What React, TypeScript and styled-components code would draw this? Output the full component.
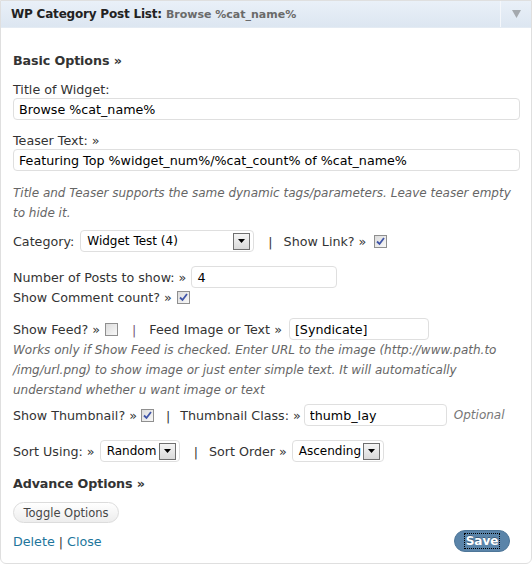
import React from "react";
import styled, { createGlobalStyle } from "styled-components";

const Global = createGlobalStyle`
  html, body { margin: 0; padding: 0; background: #fff; }
  body { font-family: "DejaVu Sans", Verdana, sans-serif; }
`;

const Widget = styled.div`
  width: 530px;
  height: 562px;
  border: 1px solid #dfdfdf;
  border-radius: 0 0 6px 6px;
  background: #fff;
  color: #333;
  font-size: 12.7px;
  display: flex;
  flex-direction: column;
`;

const Header = styled.div`
  height: 26px;
  background: linear-gradient(#e9f0f8, #dce6f1);
  display: flex;
  align-items: stretch;
  border-bottom: 1px solid #e4ebf3;
`;

const HeaderTitle = styled.div`
  flex: 1;
  display: flex;
  align-items: center;
  padding-left: 10px;
  font-weight: bold;
  font-size: 12px;
  letter-spacing: -0.2px;
  color: #222;
  white-space: nowrap;
`;

const HeaderSub = styled.span`
  font-size: 11px;
  letter-spacing: 0;
  color: #6a6a6a;
  margin-left: 4px;
`;

const HeaderToggle = styled.div`
  width: 30px;
  border-left: 1px solid #f4f7fb;
  display: flex;
  align-items: center;
  justify-content: center;
`;

const Body = styled.div`
  flex: 1;
  padding: 23px 11px 0 12px;
  display: flex;
  flex-direction: column;
`;

const Section = styled.div<{ $mt?: number }>`
  font-weight: bold;
  font-size: 12.7px;
  letter-spacing: -0.1px;
  line-height: 20px;
  color: #333;
  margin-top: ${(p) => p.$mt ?? 0}px;
`;

const Label = styled.div<{ $mt?: number }>`
  line-height: 16px;
  margin-top: ${(p) => p.$mt ?? 0}px;
`;

const Field = styled.input<{ $w?: number }>`
  box-sizing: border-box;
  height: 22px;
  width: ${(p) => (p.$w ? `${p.$w}px` : "100%")};
  flex: none;
  border: 1px solid #dfdfdf;
  border-radius: 4px;
  background: #fff;
  padding: 0 5px;
  font-family: "DejaVu Sans", Verdana, sans-serif;
  font-size: 12.7px;
  color: #000;
  outline: none;
`;

const Help = styled.div<{ $mt?: number }>`
  font-style: italic;
  font-size: 12px;
  color: #666;
  line-height: 20px;
  margin-top: ${(p) => p.$mt ?? 0}px;
`;

const Row = styled.div<{ $mt?: number; $h?: number }>`
  display: flex;
  align-items: center;
  height: ${(p) => p.$h ?? 22}px;
  margin-top: ${(p) => p.$mt ?? 0}px;
  white-space: nowrap;
`;

const Gap = styled.span<{ $w: number }>`
  display: inline-block;
  width: ${(p) => p.$w}px;
  flex: none;
`;

const Sep = styled.span<{ $c?: string }>`
  color: ${(p) => p.$c ?? "#333"};
`;

const SelectBox = styled.div<{ $w: number }>`
  box-sizing: border-box;
  width: ${(p) => p.$w}px;
  height: 22px;
  flex: none;
  border: 1px solid #dfdfdf;
  border-radius: 4px;
  display: flex;
  align-items: center;
  padding-left: 6px;
  padding-right: 3px;
  color: #000;
  font-size: 12px;
`;

const SelectText = styled.span`
  flex: 1;
`;

const DropBtn = styled.span`
  box-sizing: border-box;
  width: 17px;
  height: 17px;
  border: 1px solid #6f6f6f;
  background: linear-gradient(#f4f4f4, #dadada);
  display: flex;
  align-items: center;
  justify-content: center;
`;

const Check = styled.span`
  box-sizing: border-box;
  width: 13px;
  height: 13px;
  border: 1px solid #8f8f8f;
  background: linear-gradient(135deg, #dcdcdc, #f8f8f8);
  display: inline-flex;
  align-items: center;
  justify-content: center;
  flex: none;
`;

const Optional = styled.span`
  font-style: italic;
  font-size: 12px;
  color: #777;
`;

const ToggleBtn = styled.div`
  box-sizing: border-box;
  width: 106px;
  height: 21px;
  margin-top: 8px;
  border: 1px solid #dcdcdc;
  border-radius: 11px;
  background: linear-gradient(#ffffff, #ededed);
  color: #464646;
  font-size: 11.5px;
  display: flex;
  align-items: center;
  justify-content: center;
`;

const Footer = styled.div`
  display: flex;
  align-items: center;
  justify-content: space-between;
  height: 22px;
  margin-top: 7px;
  padding-right: 10px;
`;

const Links = styled.div`
  color: #333;
`;

const Link = styled.a`
  color: #21759b;
  text-decoration: none;
`;

const SaveBtn = styled.div`
  box-sizing: border-box;
  width: 56px;
  height: 22px;
  border-radius: 11px;
  background: #5a84a9;
  border: 1px solid #4e7698;
  display: flex;
  align-items: center;
  justify-content: center;
`;

const SaveText = styled.span`
  color: #fff;
  font-weight: bold;
  font-size: 12px;
  line-height: 14px;
  outline: 1px dotted #000;
  padding: 0 1px;
  text-shadow: 0 -1px 0 #3d5f7e;
`;

const Tick = ({ on }: { on?: boolean }) => (
  <Check>
    {on && (
      <svg width="9" height="9" viewBox="0 0 9 9">
        <path d="M1 4.5 L3.5 7 L8 1" fill="none" stroke="#4055a8" strokeWidth="1.8" />
      </svg>
    )}
  </Check>
);

const Select = ({ w, children }: { w: number; children: React.ReactNode }) => (
  <SelectBox $w={w}>
    <SelectText>{children}</SelectText>
    <DropBtn>
      <svg width="7" height="4" viewBox="0 0 7 4">
        <path d="M0 0 H7 L3.5 4 Z" fill="#000" />
      </svg>
    </DropBtn>
  </SelectBox>
);

export default function App() {
  return (
    <>
      <Global />
      <Widget>
        <Header>
          <HeaderTitle>
            WP Category Post List:<HeaderSub>Browse %cat_name%</HeaderSub>
          </HeaderTitle>
          <HeaderToggle>
            <svg width="9" height="8" viewBox="0 0 9 8">
              <path d="M0 0 H9 L4.5 8 Z" fill="#a4a9ae" />
            </svg>
          </HeaderToggle>
        </Header>
        <Body>
          <Section>Basic Options »</Section>
          <Label $mt={11}>Title of Widget:</Label>
          <Field readOnly value="Browse %cat_name%" />
          <Label $mt={13}>Teaser Text: »</Label>
          <Field readOnly value="Featuring Top %widget_num%/%cat_count% of %cat_name%" />
          <Help $mt={12}>
            Title and Teaser supports the same dynamic tags/parameters. Leave teaser empty to hide it.
          </Help>
          <Row $mt={7}>
            Category:<Gap $w={6} />
            <Select w={174}>Widget Test (4)</Select>
            <Gap $w={14} />
            <Sep>|</Sep>
            <Gap $w={11} />
            Show Link? »<Gap $w={8} />
            <Tick on />
          </Row>
          <Row $mt={14}>
            Number of Posts to show: »<Gap $w={5} />
            <Field readOnly value="4" $w={146} />
          </Row>
          <Row $h={18}>
            Show Comment count? »<Gap $w={5} />
            <Tick on />
          </Row>
          <Row $mt={12}>
            Show Feed? »<Gap $w={5} />
            <Tick />
            <Gap $w={14} />
            <Sep $c="#74547a">|</Sep>
            <Gap $w={13} />
            Feed Image or Text »<Gap $w={7} />
            <Field readOnly value="[Syndicate]" $w={140} />
          </Row>
          <Help $mt={0}>
            Works only if Show Feed is checked. Enter URL to the image (http://www.path.to
            /img/url.png) to show image or just enter simple text. It will automatically understand
            whether u want image or text
          </Help>
          <Row $mt={4}>
            Show Thumbnail? »<Gap $w={4} />
            <Tick on />
            <Gap $w={12} />
            <Sep>|</Sep>
            <Gap $w={10} />
            Thumbnail Class: »<Gap $w={3} />
            <Field readOnly value="thumb_lay" $w={143} />
            <Gap $w={7} />
            <Optional>Optional</Optional>
          </Row>
          <Row $mt={14}>
            Sort Using: »<Gap $w={5} />
            <Select w={80}>Random</Select>
            <Gap $w={14} />
            <Sep>|</Sep>
            <Gap $w={11} />
            Sort Order »<Gap $w={5} />
            <Select w={92}>Ascending</Select>
          </Row>
          <Section $mt={12}>Advance Options »</Section>
          <ToggleBtn>Toggle Options</ToggleBtn>
          <Footer>
            <Links>
              <Link href="#">Delete</Link> | <Link href="#">Close</Link>
            </Links>
            <SaveBtn>
              <SaveText>Save</SaveText>
            </SaveBtn>
          </Footer>
        </Body>
      </Widget>
    </>
  );
}
